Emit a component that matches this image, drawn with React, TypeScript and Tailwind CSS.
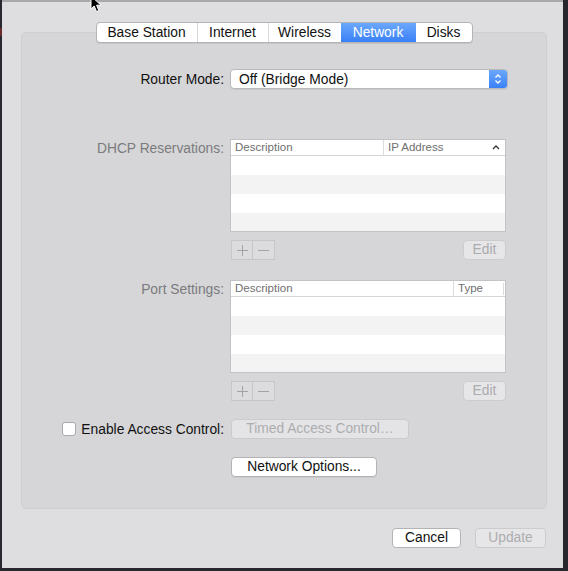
import React from "react";

const font = { fontFamily: '"Liberation Sans", Arial, sans-serif' };

function Tabs() {
  const tabs = [
    { t: "Base Station", w: 101 },
    { t: "Internet", w: 71 },
    { t: "Wireless", w: 73 },
    { t: "Network", w: 75, active: true },
    { t: "Disks", w: 57 },
  ];
  return (
    <div className="flex justify-center -mt-[11px]">
      <div className="flex h-[21px] rounded-[4px] border border-[#b4b4b6] bg-white overflow-hidden shadow-[0_1px_0_rgba(0,0,0,0.08)]">
        {tabs.map((tab, i) => (
          <div
            key={tab.t}
            className={
              "flex items-center justify-center text-[13.8px] leading-none pt-[1px] " +
              (tab.active
                ? "bg-gradient-to-b from-[#6ba8fc] to-[#3a80f7] text-white"
                : "text-[#111] ") +
              (i > 0 && !tab.active && !tabs[i - 1].active ? " border-l border-[#d9d9d9]" : "")
            }
            style={{ width: tab.w - (i === 0 || i === tabs.length - 1 ? 1 : 0) }}
          >
            {tab.t}
          </div>
        ))}
      </div>
    </div>
  );
}

function Table({ col2, sep, caret }: { col2: string; sep: number; caret?: boolean }) {
  return (
    <div className="w-[276px] h-[93px] border border-[#c3c3c5] bg-white flex flex-col">
      <div className="h-[16px] flex items-center border-b border-[#d6d6d6] text-[11.5px] text-[#707070] relative shrink-0">
        <div className="pl-[4px] h-full flex items-center border-r border-[#dcdcdc]" style={{ width: sep }}>
          Description
        </div>
        <div className="pl-[4px] flex-1 flex items-center justify-between pr-[5px]">
          <span>{col2}</span>
          {caret ? (
            <svg width="8" height="5" viewBox="0 0 8 5">
              <path d="M1 4 L4 1 L7 4" fill="none" stroke="#333" strokeWidth="1.3" />
            </svg>
          ) : (
            <span className="h-[12px] border-r border-[#dcdcdc] -mr-[4px]" />
          )}
        </div>
      </div>
      <div className="h-[19px] bg-white" />
      <div className="h-[19px] bg-[#f3f3f3]" />
      <div className="h-[19px] bg-white" />
      <div className="flex-1 bg-[#f3f3f3]" />
    </div>
  );
}

function PlusMinusEdit() {
  return (
    <div className="flex justify-between w-[276px] mt-[8px]">
      <div className="ml-[1px] flex h-[20px] border border-[#c6c6c8] bg-[#dcdcde]">
        <div className="w-[21px] flex items-center justify-center border-r border-[#c6c6c8]">
          <svg width="11" height="11" viewBox="0 0 11 11">
            <path d="M5.5 0 V11 M0 5.5 H11" stroke="#a3a3a5" strokeWidth="1" />
          </svg>
        </div>
        <div className="w-[21px] flex items-center justify-center">
          <svg width="11" height="11" viewBox="0 0 11 11">
            <path d="M0 5.5 H11" stroke="#a3a3a5" strokeWidth="1" />
          </svg>
        </div>
      </div>
      <div className="w-[43px] h-[20px] rounded-[4px] border border-[#cdcdcf] bg-[#e6e6e8] flex items-center justify-center pt-[1px] text-[13.8px] text-[#acacae]">
        Edit
      </div>
    </div>
  );
}

export default function App() {
  return (
    <div className="w-[568px] h-[571px] bg-[#26282d] relative overflow-hidden" style={font}>
      <div className="absolute left-0 top-[28px] w-[2px] h-[8px] bg-[#6b2a2a]" />
      <div className="ml-[2px] w-[561px] h-[568px] bg-[#dedee0] border-t-2 border-[#a8a8aa] flex flex-col">
        <div className="mt-[30px] ml-[19px] w-[526px] h-[477px] rounded-[5px] border border-[#cfcfd1] bg-[#d6d6d8] flex flex-col">
          <Tabs />
          {/* Router mode */}
          <div className="flex items-center mt-[26px] h-[20px]">
            <div className="w-[202px] text-right text-[13.8px] text-[#111] pt-[2px]">Router Mode:</div>
            <div className="ml-[6px] w-[278px] h-[20px] rounded-[4px] border border-[#b9b9bb] bg-white flex items-center justify-between shadow-[0_1px_0_rgba(0,0,0,0.06)] overflow-hidden">
              <span className="pl-[8px] pt-[2px] text-[13.8px] text-[#111]">Off (Bridge Mode)</span>
              <div className="w-[18px] h-full bg-gradient-to-b from-[#6ba8fc] to-[#3a80f7] flex items-center justify-center">
                <svg width="8" height="12" viewBox="0 0 8 12">
                  <path d="M1.5 4.5 L4 2 L6.5 4.5 M1.5 7.5 L4 10 L6.5 7.5" fill="none" stroke="#fff" strokeWidth="1.3" />
                </svg>
              </div>
            </div>
          </div>
          {/* DHCP */}
          <div className="flex mt-[50px]">
            <div className="w-[202px] h-[17px] pt-[4px] flex items-center justify-end text-[13.8px] text-[#7b7b7d]">DHCP Reservations:</div>
            <div className="ml-[6px] flex flex-col">
              <Table col2="IP Address" sep={153} caret />
              <PlusMinusEdit />
            </div>
          </div>
          {/* Port */}
          <div className="flex mt-[20px]">
            <div className="w-[202px] h-[17px] pt-[4px] flex items-center justify-end text-[13.8px] text-[#7b7b7d]">Port Settings:</div>
            <div className="ml-[6px] flex flex-col">
              <Table col2="Type" sep={223} />
              <PlusMinusEdit />
            </div>
          </div>
          {/* Access control */}
          <div className="flex items-center mt-[18px] h-[20px]">
            <div className="w-[202px] flex items-center justify-end gap-[5px] text-[13.8px] text-[#111]">
              <div className="w-[14px] h-[14px] rounded-[3px] border border-[#a9a9ab] bg-white" />
              <span className="pt-[2px]">Enable Access Control:</span>
            </div>
            <div className="ml-[7px] w-[178px] h-[20px] rounded-[4px] border border-[#cbcbcd] bg-[#e4e4e6] flex items-center justify-center pt-[1px] text-[13.8px] text-[#adadaf]">
              Timed Access Control…
            </div>
          </div>
          <div className="flex mt-[18px]">
            <div className="ml-[209px] w-[146px] h-[20px] rounded-[4px] border border-[#b3b3b5] bg-white flex items-center justify-center pt-[1px] text-[13.8px] text-[#111] shadow-[0_1px_0_rgba(0,0,0,0.05)]">
              Network Options...
            </div>
          </div>
        </div>
        <div className="flex justify-end gap-[14px] mt-[19px] pr-[17px]">
          <div className="w-[69px] h-[20px] rounded-[4px] border border-[#b3b3b5] bg-white flex items-center justify-center pt-[1px] text-[13.8px] text-[#111]">
            Cancel
          </div>
          <div className="w-[71px] h-[20px] rounded-[4px] border border-[#cbcbcd] bg-[#e6e6e8] flex items-center justify-center pt-[1px] text-[13.8px] text-[#adadaf]">
            Update
          </div>
        </div>
      </div>
      {/* mouse cursor */}
      <svg className="absolute left-[90px] top-[-5px]" width="14" height="18" viewBox="0 0 14 18">
        <path d="M1 1 L1 14 L4.2 11 L6.5 16.5 L8.8 15.5 L6.6 10.2 L11 10.2 Z" fill="#000" stroke="#fff" strokeWidth="1" />
      </svg>
    </div>
  );
}
